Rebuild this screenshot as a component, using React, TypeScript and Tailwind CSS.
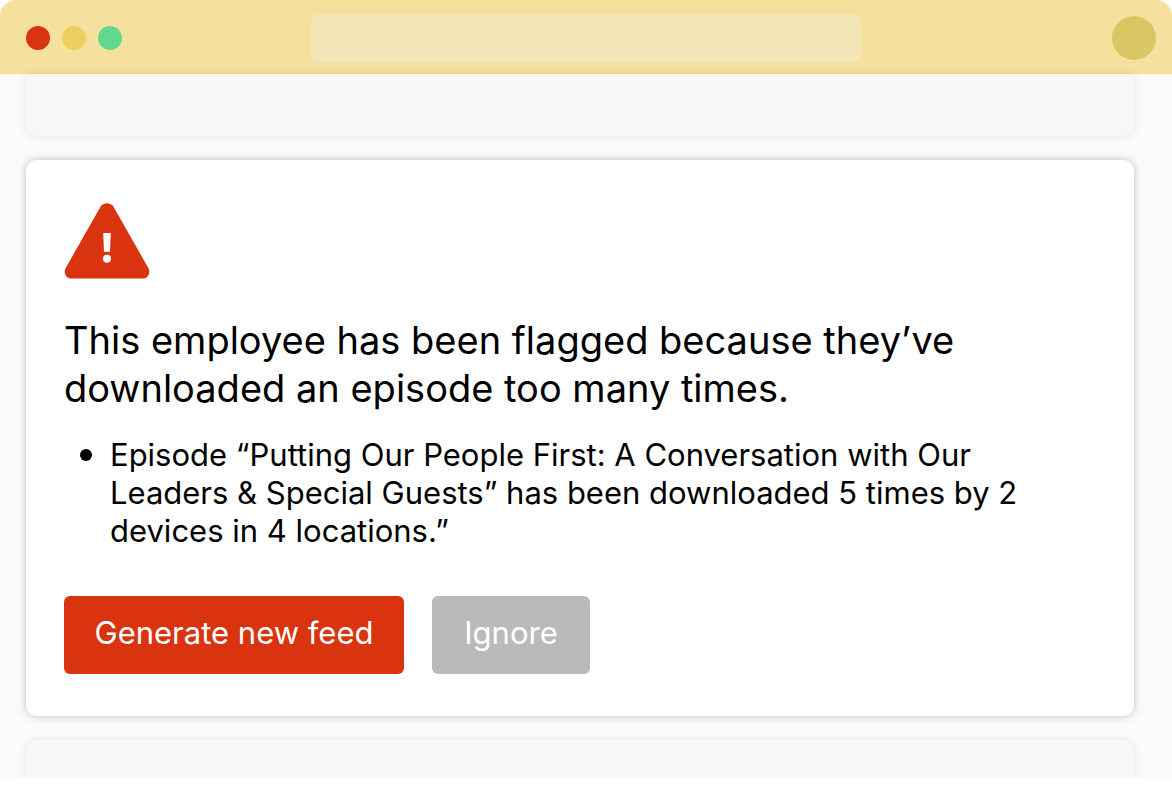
import React from 'react'

const WindowBar = () => {
  return (
    <header className="grid grid-cols-[1fr_550px_1fr] items-center h-[74px] px-4 pt-0.5 rounded-t-2xl bg-[#f5e19d]">
      <div className="flex gap-3 pl-2.5">
        <span className="size-6 rounded-full bg-[#d9340f]"></span>
        <span className="size-6 rounded-full bg-[#eecf5e]"></span>
        <span className="size-6 rounded-full bg-[#60d98f]"></span>
      </div>
      <input aria-label="Address" className="w-full h-12 px-4 rounded-md bg-[#f2e6b7] outline-none" />
      <span className="justify-self-end size-11 rounded-full bg-[#dac662]"></span>
    </header>
  )
}

const WarningIcon = () => {
  return (
    <svg width="86" height="76" viewBox="0 0 86 76" aria-hidden="true">
      <path d="M36.5 3.8 1.7 64.9C-1 69.7 2 75.5 7.4 75.5H78.6C84 75.5 87 69.7 84.3 64.9L49.5 3.8C46.6-.9 39.4-.9 36.5 3.8Z" fill="#d9340f" />
      <path d="M39.2 30H46.8L46 48.8H40Z" fill="#fff" />
      <circle cx="43" cy="55.7" r="4" fill="#fff" />
    </svg>
  )
}

const FlaggedCard = () => {
  return (
    <section className="pt-[43px] px-[38px] pb-[42px] rounded-[10px] bg-white shadow-[0_0_8px_rgba(0,0,0,0.25)]">
      <WarningIcon />
      <h1 className="mt-[37px] max-w-[940px] text-[38px] leading-[48px]">
        This employee has been flagged because they’ve downloaded an episode too many times.
      </h1>

      <ul className="mt-6 max-w-[960px] text-[31px] leading-[38px]">
        <li className="flex gap-[18px] pl-4">
          <span className="shrink-0 size-3 mt-[13px] rounded-full bg-black"></span>
          <span>
            Episode “Putting Our People First: A Conversation with Our Leaders &amp; Special Guests” has been downloaded 5 times by 2 devices in 4 locations.”
          </span>
        </li>
      </ul>

      <div className="flex gap-7 mt-[46px] text-[31px] leading-[38px] text-white">
        <button type="button" className="min-w-[340px] pt-[18px] pb-[22px] rounded-md bg-[#d9340f]">Generate new feed</button>
        <button type="button" className="min-w-[158px] pt-[18px] pb-[22px] rounded-md bg-[#bababa]">Ignore</button>
      </div>
    </section>
  )
}

const App = () => {
  return (
    <div className="bg-white text-black font-['Inter',sans-serif]">
      <WindowBar />
      <main className="flex flex-col gap-6 pl-[26px] pr-[38px] bg-[#fbfbfb]">
        <div className="h-[62px] rounded-b-[10px] bg-[#f7f7f7] shadow-[0_0_8px_rgba(0,0,0,0.1)]"></div>
        <FlaggedCard />
        <div className="h-[38px] rounded-t-[10px] bg-[#f7f7f7] shadow-[0_0_8px_rgba(0,0,0,0.1)]"></div>
      </main>
    </div>
  )
}

export default App
